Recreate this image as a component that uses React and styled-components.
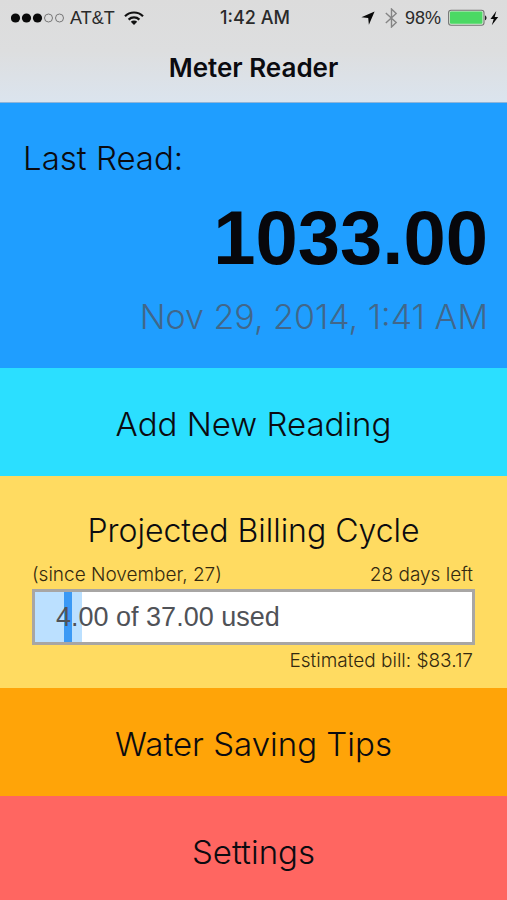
import React from 'react';
import styled, { createGlobalStyle } from 'styled-components';

const GlobalStyle = createGlobalStyle`
	* {
		box-sizing: border-box;
	}

	body {
		margin: 0;
		background: #ff6661;
		color: #0b0b10;
		font-family: 'Inter', 'Liberation Sans', sans-serif;
	}
`;

const Screen = styled.div`
	display: flex;
	flex-direction: column;
	min-height: 100vh;
`;

const Header = styled.header`
	background: linear-gradient(#dcdcdc 0%, #dddedf 50%, #dbe4ee 100%);
	border-bottom: 1px solid #8fb4d8;
`;

const StatusBar = styled.div`
	display: grid;
	grid-template-columns: 1fr auto 1fr;
	align-items: center;
	padding: 6px 8px 4px 11px;
	font-family: 'Liberation Sans', sans-serif;
	font-size: 18px;
	line-height: 24px;
	color: #2a2a2a;
`;

const StatusGroup = styled.div`
	display: flex;
	align-items: center;
	justify-content: ${(props) => (props.$end ? 'flex-end' : 'flex-start')};
	gap: ${(props) => props.$gap || 8}px;
`;

const Clock = styled.time`
	font-family: 'Inter', sans-serif;
	font-size: 18px;
	font-weight: 500;
`;

const Title = styled.h1`
	margin: 0;
	padding: 17px 16px 18px;
	font-size: 26px;
	font-weight: 600;
	line-height: 33px;
	text-align: center;
`;

const LastRead = styled.section`
	display: flex;
	flex-direction: column;
	padding: 34px 19px 32px 23px;
	background: #1f9eff;
`;

const Heading = styled.h2`
	margin: 0;
	font-size: ${(props) => (props.$compact ? 32 : 33)}px;
	font-weight: 300;
	line-height: 42px;
`;

const Reading = styled.strong`
	font-family: 'Liberation Sans', sans-serif;
	font-size: 76px;
	line-height: 118px;
	text-align: right;
	color: #07070b;
`;

const ReadDate = styled.time`
	font-size: 34px;
	font-weight: 300;
	line-height: 39px;
	text-align: right;
	color: #41678a;
`;

const Tile = styled.button`
	padding: 35px 16px 31px;
	border: 0;
	background: ${(props) => props.$color};
	color: inherit;
	cursor: pointer;
	font-family: inherit;
	font-size: 33px;
	font-weight: 300;
	line-height: 42px;

	&:last-child {
		flex: 1;
		padding-bottom: 27px;
	}
`;

const Billing = styled.section`
	padding: 34px 32px 15px;
	background: #ffdb61;
	text-align: center;
`;

const Note = styled.div`
	display: flex;
	justify-content: ${(props) => (props.$end ? 'flex-end' : 'space-between')};
	padding: ${(props) => (props.$end ? '4px 2px 0 0' : '11px 2px 2px 0')};
	font-size: 19px;
	font-weight: 300;
	line-height: 24px;
	color: #33290f;
`;

const Usage = styled.div`
	position: relative;
	padding: 0 21px;
	border: 3px solid #a8a6a4;
	background: #fff;
	color: #505257;
	font-family: 'Liberation Sans', sans-serif;
	font-size: 27px;
	line-height: 50px;
	text-align: left;
`;

const UsageFill = styled.div`
	position: absolute;
	top: 0;
	bottom: 0;
	left: 0;
	background: #bbe0ff;
`;

const TodayMark = styled.div`
	position: absolute;
	top: 0;
	bottom: 0;
	width: 8px;
	background: #3b99f5;
`;

const UsageText = styled.span`
	position: relative;
`;

function Signal() {
	return (
		<svg width="54" height="12" viewBox="0 0 54 12" aria-hidden="true">
			{[0, 1, 2].map((i) => (
				<circle key={i} cx={4.5 + i * 11} cy="6" r="4.6" fill="#0a0a0a" />
			))}
			{[3, 4].map((i) => (
				<circle key={i} cx={4.5 + i * 11} cy="6" r="4" fill="none" stroke="#777" />
			))}
		</svg>
	);
}

function Wifi() {
	return (
		<svg width="28" height="16" viewBox="-4 0 28 16" fill="none" stroke="#111" strokeWidth="2.2" aria-hidden="true">
			<path d="M1 6.2a12.8 12.8 0 0 1 18 0" />
			<path d="M4.6 9.6a7.8 7.8 0 0 1 10.8 0" />
			<path d="M10 15l-3.2-3.2a4.6 4.6 0 0 1 6.4 0z" fill="#111" stroke="none" />
		</svg>
	);
}

function Location() {
	return (
		<svg width="17" height="14" viewBox="0 0 17 14" aria-hidden="true">
			<path d="M13.6.4L7.9 13.8 7.2 7 .4 6.3z" fill="#080808" />
		</svg>
	);
}

function Bluetooth() {
	return (
		<svg width="13" height="20" viewBox="0 0 13 20" fill="none" stroke="#858585" strokeWidth="1.4" aria-hidden="true">
			<path d="M.8 5l10.4 9.6L6.5 19V1l4.7 4.4L.8 15" />
		</svg>
	);
}

function Battery() {
	return (
		<svg width="51" height="18" viewBox="0 0 51 18" aria-hidden="true">
			<rect x=".6" y="1.2" width="35.4" height="15" rx="2.5" fill="#d6ead6" stroke="#747474" strokeWidth="1.1" />
			<rect x="2" y="2.6" width="32.4" height="12.2" rx="1" fill="#4bd964" />
			<path d="M37 6.4c2 .5 2 4.2 0 4.8z" fill="#222" />
			<path d="M48.3 2l-5.8 8h3.2l-1.9 6.2 6.4-8.2h-3.5z" fill="#080808" />
		</svg>
	);
}

function UsageBar({ used, total, elapsed }) {
	return (
		<Usage>
			<UsageFill style={{ width: `${(used / total) * 100}%` }} />
			<TodayMark style={{ left: `${elapsed * 100}%` }} />
			<UsageText>
				{used.toFixed(2)} of {total.toFixed(2)} used
			</UsageText>
		</Usage>
	);
}

function App() {
	return (
		<Screen>
			<GlobalStyle />
			<Header>
				<StatusBar>
					<StatusGroup $gap={5}>
						<Signal />
						<span>AT&amp;T</span>
						<Wifi />
					</StatusGroup>
					<Clock>1:42 AM</Clock>
					<StatusGroup $end $gap={7}>
						<Location />
						<Bluetooth />
						<span>98%</span>
						<Battery />
					</StatusGroup>
				</StatusBar>
				<Title>Meter Reader</Title>
			</Header>
			<LastRead>
				<Heading>Last Read:</Heading>
				<Reading>1033.00</Reading>
				<ReadDate>Nov 29, 2014, 1:41 AM</ReadDate>
			</LastRead>
			<Tile $color="#2bdfff">Add New Reading</Tile>
			<Billing>
				<Heading $compact>Projected Billing Cycle</Heading>
				<Note>
					<span>(since November, 27)</span>
					<span>28 days left</span>
				</Note>
				<UsageBar used={4} total={37} elapsed={2 / 30} />
				<Note $end>Estimated bill: $83.17</Note>
			</Billing>
			<Tile $color="#ffa408">Water Saving Tips</Tile>
			<Tile $color="#ff6661">Settings</Tile>
		</Screen>
	);
}

export default App;
